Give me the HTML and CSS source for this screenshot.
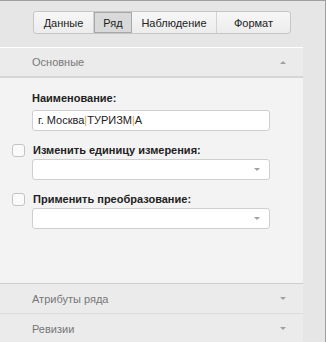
FILE: index.html
```html
<!DOCTYPE html>
<html lang="ru">

<head>
    <meta charset="UTF-8">
    <title>Ряд</title>
    <link rel="stylesheet" href="styles.css">
</head>

<body>
    <div class="frame">
        <!-- Вкладки -->
        <div class="tabs">
            <div class="tab">Данные</div>
            <div class="tab active">Ряд</div>
            <div class="tab">Наблюдение</div>
            <div class="tab tab-last">Формат</div>
        </div>

        <!-- Панель -->
        <div class="panel">
            <div class="section-head">
                <span>Основные</span>
                <span class="arrow up"></span>
            </div>

            <div class="section-body">
                <div class="field-label">Наименование:</div>
                <div class="input">г. Москва<span class="sep">|</span>ТУРИЗМ<span class="sep">|</span>А</div>

                <div class="check-row">
                    <span class="checkbox"></span>
                    <span class="field-label">Изменить единицу измерения:</span>
                </div>
                <div class="select"><span class="arrow down"></span></div>

                <div class="check-row">
                    <span class="checkbox"></span>
                    <span class="field-label">Применить преобразование:</span>
                </div>
                <div class="select"><span class="arrow down"></span></div>
            </div>

            <div class="section-head closed">
                <span>Атрибуты ряда</span>
                <span class="arrow down"></span>
            </div>
            <div class="section-head closed">
                <span>Ревизии</span>
                <span class="arrow down"></span>
            </div>
        </div>
    </div>
</body>

</html>
```

FILE: styles.css
```css
* {
    margin: 0;
    padding: 0;
    box-sizing: border-box;
}

body {
    font-family: 'Liberation Sans', Arial, sans-serif;
    font-size: 11px;
    background: #e6e6e6;
    color: #333;
    width: 326px;
    height: 342px;
    overflow: hidden;
}

.frame {
    height: 342px;
    border-top: 1px solid #a0a0a0;
    border-right: 1px solid #a0a0a0;
    background: #e6e6e6;
}

/* ВКЛАДКИ */
.tabs {
    display: flex;
    margin: 10px 0 0 33px;
    width: 258px;
    height: 23px;
    border: 1px solid #c6c6c6;
    border-radius: 3px;
    background: linear-gradient(#f7f7f7, #ececec);
    overflow: hidden;
}

.tab {
    display: flex;
    align-items: center;
    justify-content: center;
    color: #222;
    border-right: 1px solid #d2d2d2;
    padding: 0 9px;
}

.tab:nth-child(1) { width: 60px; }
.tab:nth-child(2) { width: 38px; }
.tab:nth-child(3) { width: 85px; }
.tab-last { flex: 1; border-right: none; }

.tab.active {
    background: #d9d9d9;
    border: 1px solid #a8a8a8;
}

/* ПАНЕЛЬ */
.panel {
    margin-top: 13px;
    width: 303px;
    background: #f3f3f3;
    border-top: 1px solid #fff;
}

.section-head {
    display: flex;
    align-items: center;
    justify-content: space-between;
    height: 30px;
    padding: 0 17px 0 32px;
    background: #ebebeb;
    color: #777;
    border-bottom: 2px solid #d6d6d6;
}

.section-head.closed {
    height: 30px;
    border-bottom: 1px solid #dcdcdc;
}

.section-body {
    padding: 13px 33px 0 32px;
    height: 206px;
    border-bottom: 1px solid #cfcfcf;
}

.field-label {
    font-weight: bold;
    font-size: 11px;
    color: #222;
    line-height: 14px;
}

.input,
.select {
    position: relative;
    height: 21px;
    margin-top: 5px;
    border: 1px solid #cfcfcf;
    border-radius: 3px;
    background: #fff;
    padding: 3px 5px;
    color: #222;
}

.check-row + .select {
    margin-top: 2px;
}

.sep {
    color: #e0a040;
}

.check-row {
    display: flex;
    align-items: center;
    height: 14px;
    margin: 12px 0 0 -20px;
    gap: 8px;
}

.checkbox {
    width: 13px;
    height: 13px;
    border: 1px solid #c4c4c4;
    border-radius: 3px;
    background: #fafafa;
}

.arrow {
    width: 0;
    height: 0;
    border-left: 3px solid transparent;
    border-right: 3px solid transparent;
}

.arrow.up {
    border-bottom: 3px solid #a0a0a0;
}

.arrow.down {
    border-top: 3px solid #a0a0a0;
}

.select .arrow {
    position: absolute;
    right: 9px;
    top: 8px;
}
```
